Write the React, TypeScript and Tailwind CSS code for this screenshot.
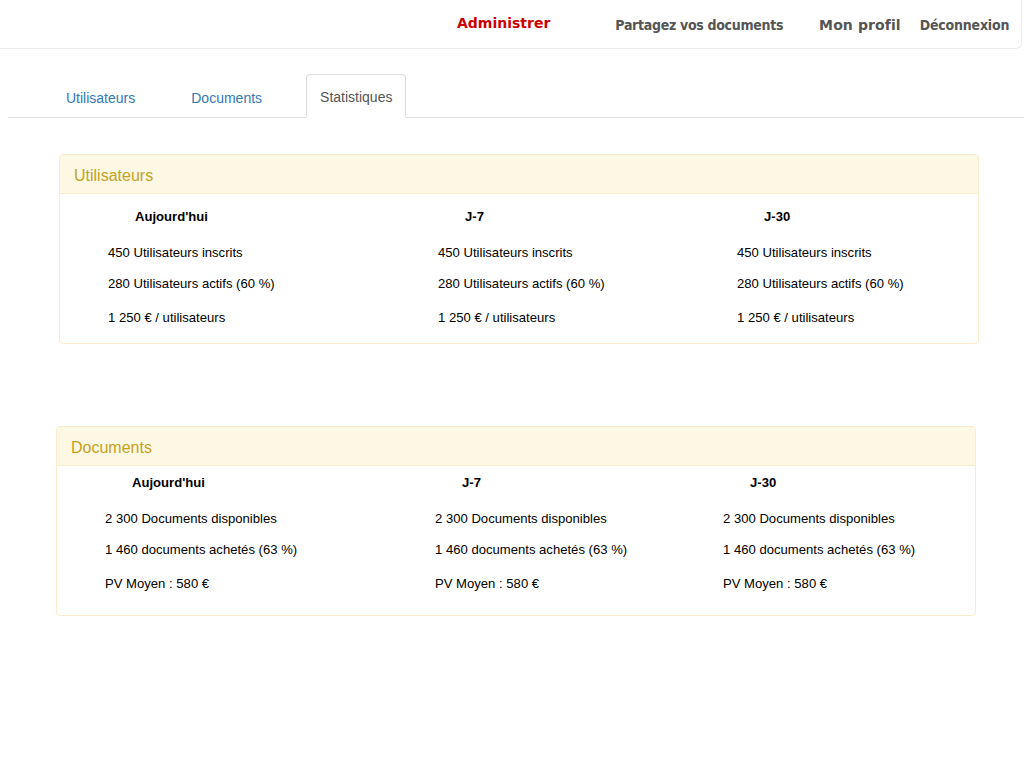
const sans = { fontFamily: '"Liberation Sans", Arial, sans-serif' };

const usersStats = [
  "450 Utilisateurs inscrits",
  "280 Utilisateurs actifs (60 %)",
  "1 250 € / utilisateurs",
];

const docsStats = [
  "2 300 Documents disponibles",
  "1 460 documents achetés (63 %)",
  "PV Moyen : 580 €",
];

const periods = ["Aujourd'hui", "J-7", "J-30"];

function StatsPanel({
  title,
  rows,
  cols,
  className,
  bodyClass,
}: {
  title: string;
  rows: string[];
  cols: string;
  className: string;
  bodyClass: string;
}) {
  return (
    <div className={`rounded border border-[#faebcc] bg-white ${className}`}>
      <div className="h-[39px] bg-[#fcf8e3] border-b border-[#faebcc] rounded-t px-[14px] pt-[3px] flex items-center text-[16px] text-[#c5a21d]">
        {title}
      </div>
      <div className={`grid ${cols} text-[13.1px] leading-4 text-black ${bodyClass}`}>
        {periods.map((p) => (
          <div key={p}>
            <div className="font-bold pl-[27px] mb-5">{p}</div>
            <div className="h-4">{rows[0]}</div>
            <div className="h-4 mt-[15px]">{rows[1]}</div>
            <div className="h-4 mt-[18px]">{rows[2]}</div>
          </div>
        ))}
      </div>
    </div>
  );
}

export default function App() {
  return (
    <div className="min-h-[768px] bg-white" style={sans}>
      <header
        className="w-[1022px] h-[49px] pt-[2px] border-r border-b border-[#ececec] rounded-br-md flex items-center font-bold text-[#555]"
        style={{ fontFamily: '"DejaVu Sans", Verdana, sans-serif' }}
      >
        <span className="ml-[457px] -mt-[3px] text-[14px] text-[#cc0000]">Administrer</span>
        <span
          className="ml-[65px] text-[14px] tracking-[-0.3px]"
          style={{ fontFamily: '"DejaVu Sans Condensed", "DejaVu Sans", sans-serif' }}
        >
          Partagez vos documents
        </span>
        <span className="ml-[36px] text-[14px] tracking-[0.1px]">Mon profil</span>
        <span
          className="ml-[19px] text-[14px] tracking-[-0.2px]"
          style={{ fontFamily: '"DejaVu Sans Condensed", "DejaVu Sans", sans-serif' }}
        >
          Déconnexion
        </span>
      </header>

      <nav className="mt-[25px] ml-2 border-b border-[#dddddd] flex items-end h-[44px] text-[14px] leading-5">
        <a className="ml-[45px] px-[13px] pt-[13px] pb-[9px] text-[#337ab7]">Utilisateurs</a>
        <a className="ml-[30px] px-[13px] pt-[13px] pb-[9px] text-[#337ab7]">Documents</a>
        <a className="ml-[31px] -mb-px px-[13px] pt-[12px] pb-[10px] text-[#555] bg-white border border-[#dddddd] border-b-white rounded-t">
          Statistiques
        </a>
      </nav>

      <StatsPanel
        title="Utilisateurs"
        rows={usersStats}
        cols="grid-cols-[330px_299px_1fr]"
        className="mt-[36px] ml-[59px] w-[920px]"
        bodyClass="pl-[48px] pt-[15px] pb-[17px]"
      />

      <StatsPanel
        title="Documents"
        rows={docsStats}
        cols="grid-cols-[330px_288px_1fr]"
        className="mt-[82px] ml-[56px] w-[920px]"
        bodyClass="pl-[48px] pt-[9px] pb-[23px]"
      />
    </div>
  );
}
